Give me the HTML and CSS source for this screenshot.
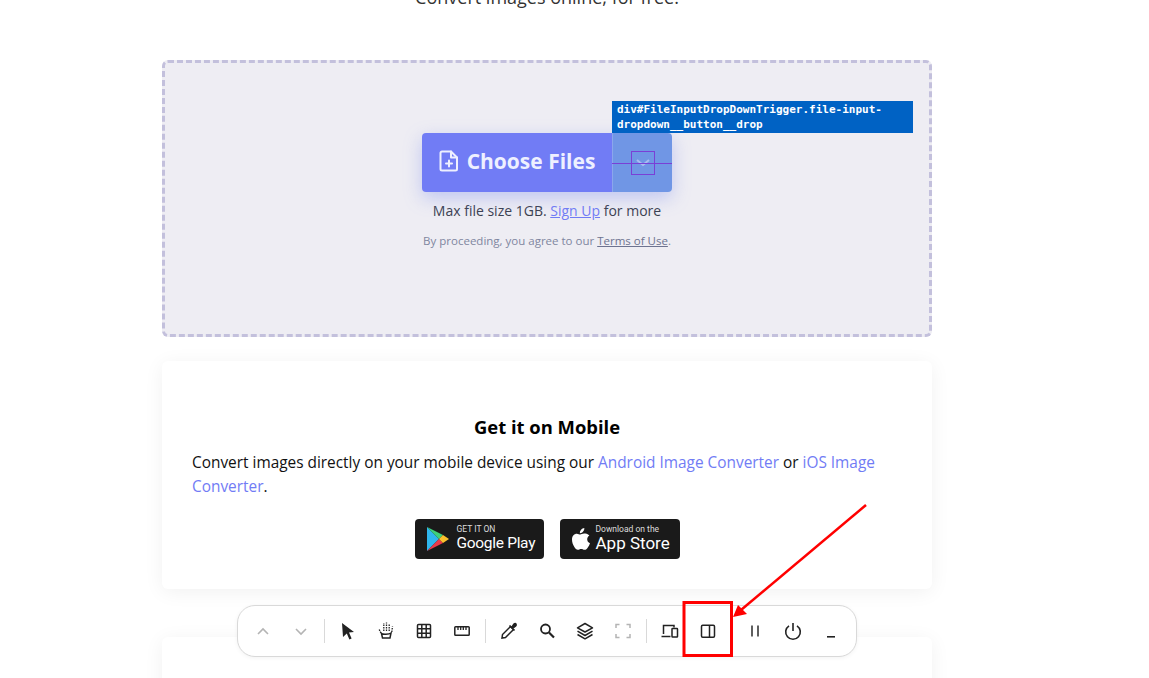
FILE: index.html
```html
<!DOCTYPE html>
<html lang="en">
<head>
  <meta charset="UTF-8" />
  <meta name="viewport" content="width=device-width, initial-scale=1.0"/>
  <title>Image Converter</title>
  <link rel="stylesheet" href="styles.css">
</head>
<body>
  <main class="page">
    <p class="subtitle">Convert images online, for free.</p>

    <section class="dropzone">
      <div class="file-button">
        <div class="file-button__main">
          <svg class="file-icon" width="20" height="22" viewBox="0 0 20 22" fill="none" stroke="#eef0ff" stroke-width="2" stroke-linejoin="round" stroke-linecap="round">
            <path d="M3 1.500h9l6 6V19a1.500 1.500 0 0 1-1.500 1.500h-13.500A1.500 1.500 0 0 1 1.500 19V3A1.500 1.500 0 0 1 3 1.500z"/>
            <path d="M12 1.500V7.500h6"/>
            <path d="M10 10.500v6M7 13.500h6"/>
          </svg>
          <span>Choose Files</span>
        </div>
        <div class="file-button__drop">
          <svg width="16" height="10" viewBox="0 0 16 10" fill="none" stroke="#a9bdf0" stroke-width="2"><path d="M2 2l6 5 6-5"/></svg>
          <span class="guide-line"></span>
          <span class="guide-box"></span>
        </div>
        <div class="inspect-label">div#FileInputDropDownTrigger.file-input-dropdown__button__drop</div>
      </div>
      <p class="limit">Max file size 1GB. <a href="#" class="link">Sign Up</a> for more</p>
      <p class="terms">By proceeding, you agree to our <a href="#" class="terms-link">Terms of Use</a>.</p>
    </section>

    <section class="card">
      <h2>Get it on Mobile</h2>
      <p>Convert images directly on your mobile device using our <a href="#" class="plain-link">Android Image Converter</a> or <a href="#" class="plain-link">iOS Image Converter</a>.</p>
      <div class="badges">
        <a href="#" class="badge badge--play">
          <svg width="24" height="26" viewBox="0 0 24 26">
            <path d="M1 1v24l12-12z" fill="#2fb6ee"/>
            <path d="M1 1l12 12 4-4z" fill="#3ecf7a"/>
            <path d="M1 25l12-12 4 4z" fill="#ea3a4b"/>
            <path d="M17 9l6 4-6 4-4-4z" fill="#fbc02d"/>
          </svg>
          <span class="badge__text">
            <small>GET IT ON</small>
            <b>Google Play</b>
          </span>
        </a>
        <a href="#" class="badge badge--apple">
          <svg width="18" height="22" viewBox="0 0 18 22" fill="#fff">
            <path d="M12.300 0c.2 1.500-.4 2.700-1.200 3.600-.8 1-2 1.700-3.200 1.600-.2-1.300.5-2.600 1.200-3.400C9.900.8 11.300.1 12.300 0z"/>
            <path d="M17.400 7.400c-1.500 1-2.200 2.200-2.200 3.800 0 1.800 1 3.200 2.800 4-.5 1.500-1.200 2.900-2.200 4.200-.9 1.200-1.800 2.400-3.200 2.400-1.300 0-1.800-.8-3.400-.8s-2.200.8-3.400.8c-1.400 0-2.400-1.300-3.300-2.600C.9 16.800 0 14 0 11.500c0-3.700 2.400-5.800 4.800-5.800 1.400 0 2.600.9 3.500.9.800 0 2.200-1 3.800-1 1.200 0 3.800.3 5.300 1.800z"/>
          </svg>
          <span class="badge__text">
            <small>Download on the</small>
            <b class="badge__store">App Store</b>
          </span>
        </a>
      </div>
    </section>

    <section class="card card--next"></section>
  </main>

  <div class="toolbar">
    <button class="tool"><svg width="20" height="20" viewBox="0 0 20 20" fill="none" stroke="#b4b4b4" stroke-width="1.600"><path d="M5 13l5-5 5 5"/></svg></button>
    <button class="tool"><svg width="20" height="20" viewBox="0 0 20 20" fill="none" stroke="#b4b4b4" stroke-width="1.600"><path d="M5 8l5 5 5-5"/></svg></button>
    <span class="tool-sep"></span>
    <button class="tool"><svg width="20" height="20" viewBox="0 0 20 20" fill="#222"><path d="M4 2l12 9-5 .6 2.600 6-2.200 1-2.600-6L5 16z"/></svg></button>
    <button class="tool"><svg width="20" height="20" viewBox="0 0 20 20" fill="none" stroke="#222" stroke-width="1.300" stroke-dasharray="1.500 1"><path d="M7.800 10V2M10.500 10V1.500M13.200 10V2.500M15.800 11l.7-5.500M3.200 8.500l2 4"/><path d="M5.500 12.500c1 1 7.500 1 9.500-.5l-1 5h-7.500z" stroke-dasharray="none" stroke-width="1.500"/></svg></button>
    <button class="tool"><svg width="20" height="20" viewBox="0 0 20 20" fill="none" stroke="#222" stroke-width="1.500"><rect x="3.500" y="3.500" width="13" height="13" rx="1"/><path d="M7.800 3.500v13M12.200 3.500v13M3.500 7.800h13M3.500 12.200h13"/></svg></button>
    <button class="tool"><svg width="20" height="20" viewBox="0 0 20 20" fill="none" stroke="#222" stroke-width="1.500"><rect x="2.800" y="5.800" width="14.400" height="8.400" rx=".8"/><path d="M6 6v3M8.700 6v3M11.300 6v3M14 6v3" stroke-width="1.300"/></svg></button>
    <span class="tool-sep"></span>
    <button class="tool"><svg width="20" height="20" viewBox="0 0 20 20" fill="none" stroke="#222" stroke-width="1.500"><path d="M11.500 5.500l3 3-8 8-3.500.5.500-3.500z"/><path d="M10.500 4.500l5 5M13 6l2-3c.8-.8 1.600-.8 2 0s.3 1.300-.3 1.900L14 7z" fill="#222"/></svg></button>
    <button class="tool"><svg width="20" height="20" viewBox="0 0 20 20" fill="none" stroke="#222" stroke-width="1.800"><circle cx="8.500" cy="8" r="4.500"/><path d="M12 11.500l5 5" stroke-width="2.200"/></svg></button>
    <button class="tool"><svg width="20" height="20" viewBox="0 0 20 20" fill="none" stroke="#222" stroke-width="1.500" stroke-linejoin="round"><path d="M10 2.500l7.500 4.300L10 11 2.500 6.800z"/><path d="M2.500 10.200L10 14.500l7.500-4.300M2.500 13.500L10 17.800l7.500-4.300"/></svg></button>
    <button class="tool"><svg width="20" height="20" viewBox="0 0 20 20" fill="none" stroke="#b4b4b4" stroke-width="1.500"><path d="M3 7V3.500h3.500M13.500 3.500H17V7M17 13v3.500h-3.500M6.500 16.500H3V13"/></svg></button>
    <span class="tool-sep"></span>
    <button class="tool"><svg width="20" height="20" viewBox="0 0 20 20" fill="none" stroke="#222" stroke-width="1.500"><path d="M3.500 13V4.500h10.500V6.500"/><path d="M1.500 15.500h9"/><rect x="12" y="7.500" width="5.500" height="8.500" rx=".6"/></svg></button>
    <button class="tool"><svg width="20" height="20" viewBox="0 0 20 20" fill="none" stroke="#222" stroke-width="1.500"><rect x="3.500" y="4.200" width="13" height="12" rx="1.200"/><path d="M11.500 4.200v12"/></svg></button>
    <span class="tool-gap"></span>
    <button class="tool"><svg width="20" height="20" viewBox="0 0 20 20" fill="none" stroke="#444" stroke-width="1.700"><path d="M7 4.500v11M13 4.500v11"/></svg></button>
    <button class="tool"><svg width="20" height="20" viewBox="0 0 20 20" fill="none" stroke="#222" stroke-width="1.600"><path d="M6 4.800a7.300 7.300 0 1 0 8 0"/><path d="M10 2v8"/></svg></button>
    <button class="tool"><svg width="20" height="20" viewBox="0 0 20 20" fill="none" stroke="#222" stroke-width="1.600"><path d="M6 15.800h8"/></svg></button>
  </div>

  <svg class="callout" width="1149" height="678" viewBox="0 0 1149 678">
    <rect x="684" y="602.500" width="47.500" height="53" fill="none" stroke="#f00" stroke-width="3"/>
    <path d="M866 505L741 610" fill="none" stroke="#f00" stroke-width="2.500"/>
    <path d="M733 617l5-12 9 9z" fill="#f00"/>
  </svg>
</body>
</html>
```

FILE: styles.css
```css
body {
  font-family: "Open Sans", "Noto Sans", sans-serif;
  background-color: #ffffff;
  color: #111;
  margin: 0;
  height: 678px;
  overflow: hidden;
  position: relative;
}
.page {
  width: 770px;
  margin-left: 162px;
}
.subtitle {
  margin: -13px 0 0 0;
  height: 73px;
  line-height: 20px;
  text-align: center;
  font-size: 18px;
  color: #333;
}
.dropzone {
  box-sizing: border-box;
  height: 277px;
  padding-top: 70px;
  background-color: #eeedf3;
  border: 3px dashed #c3c0dc;
  border-radius: 6px;
  display: flex;
  flex-direction: column;
  align-items: center;
}
.file-button {
  position: relative;
  display: flex;
  width: 250px;
  height: 59px;
  border-radius: 4px;
  box-shadow: 0 6px 18px #7a8cf066;
}
.file-button__main {
  width: 190px;
  display: flex;
  align-items: center;
  justify-content: center;
  gap: 8px;
  background-color: #717cf5;
  border-radius: 4px 0 0 4px;
  color: #eef0ff;
  font-size: 21px;
  font-weight: 700;
  line-height: 28px;
}
.file-button__main span {
  margin-top: -3px;
}
.file-icon {
  margin-top: -3px;
}
.file-button__drop {
  position: relative;
  width: 60px;
  display: flex;
  align-items: center;
  justify-content: center;
  box-sizing: border-box;
  background-color: #7096e5;
  border-left: 1px solid #8ba6ec;
  border-radius: 0 4px 4px 0;
}
.guide-line {
  position: absolute;
  left: -1px;
  right: 0;
  top: 30px;
  height: 1px;
  background: #7a3fd6;
}
.guide-box {
  position: absolute;
  left: 18px;
  top: 18px;
  width: 22px;
  height: 22px;
  border: 1px solid #7a3fd6;
}
.inspect-label {
  position: absolute;
  left: 190px;
  bottom: 59px;
  box-sizing: border-box;
  width: 301px;
  height: 32px;
  padding: 1px 5px;
  background: #0062c4;
  color: #fff;
  font-family: "DejaVu Sans Mono", monospace;
  font-size: 11px;
  font-weight: 700;
  line-height: 15px;
}
.limit {
  margin: 9px 0 0 0;
  line-height: 20px;
  font-size: 14px;
  color: #3c4150;
}
.link {
  color: #717cf5;
  text-decoration: underline;
}
.terms {
  margin: 11px 0 0 0;
  line-height: 18px;
  font-size: 11.500px;
  color: #7f86a0;
}
.terms-link {
  color: #6d7390;
  text-decoration: underline;
}
.card {
  box-sizing: border-box;
  height: 228px;
  margin-top: 24px;
  padding: 51px 30px 0 30px;
  background: #fff;
  border-radius: 6px;
  box-shadow: 0 3px 20px #0000000f;
}
.card h2 {
  margin: 0;
  text-align: center;
  font-size: 18.400px;
  line-height: 30px;
  font-weight: 700;
  color: #000;
}
.card p {
  margin: 9px 0 0 0;
  font-size: 15.400px;
  line-height: 24px;
  color: #111;
}
.plain-link {
  color: #717cf5;
  text-decoration: none;
}
.badges {
  display: flex;
  justify-content: center;
  gap: 16px;
  margin-top: 20px;
}
.badge {
  display: flex;
  align-items: center;
  height: 40px;
  border-radius: 4px;
  background: #1a1a1a;
  color: #fff;
  text-decoration: none;
  font-family: Roboto, sans-serif;
}
.badge--play {
  width: 129px;
  padding-left: 11px;
  gap: 7px;
  box-sizing: border-box;
}
.badge--apple {
  width: 120px;
  padding-left: 12px;
  gap: 6px;
  box-sizing: border-box;
}
.badge__text {
  display: flex;
  flex-direction: column;
}
.badge__text small {
  font-size: 8.500px;
  line-height: 9px;
  color: #ddd;
  margin-top: -2px;
}
.badge__text b {
  font-size: 15.500px;
  line-height: 18px;
  font-weight: 400;
  letter-spacing: -.3px;
}
.badge__text .badge__store {
  font-size: 17px;
  letter-spacing: 0;
}
.card--next {
  margin-top: 48px;
}
.toolbar {
  position: absolute;
  left: 237px;
  top: 605px;
  box-sizing: border-box;
  width: 620px;
  height: 52px;
  padding: 0 6px;
  display: flex;
  align-items: center;
  background: #fff;
  border: 1px solid #d9d9d9;
  border-radius: 18px;
  box-shadow: 0 1px 4px #0000000d;
}
.tool {
  width: 38px;
  height: 38px;
  flex: none;
  padding: 0;
  border: none;
  background: none;
  display: flex;
  align-items: center;
  justify-content: center;
}
.tool-sep {
  flex: none;
  width: 1px;
  height: 24px;
  margin: 0 4px;
  background: #d9d9d9;
}
.tool-gap {
  flex: none;
  width: 9px;
}
.callout {
  position: absolute;
  left: 0;
  top: 0;
  pointer-events: none;
}
```
